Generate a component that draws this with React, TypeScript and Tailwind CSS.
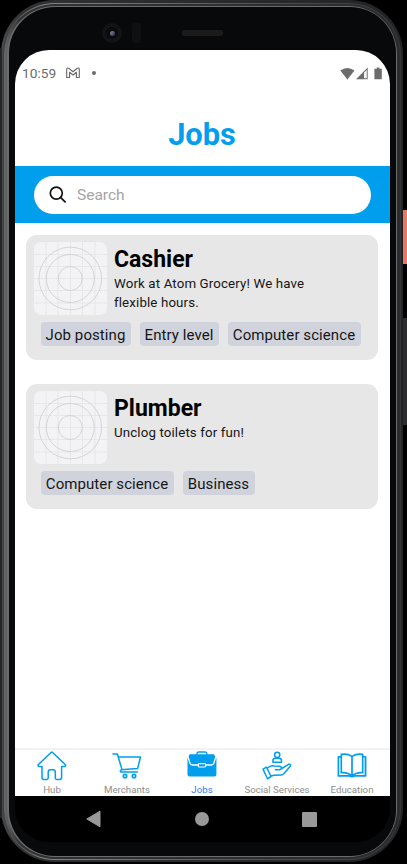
import React from "react";

const BLUE = "#019eed";

function Thumb() {
  return (
    <svg className="block h-[73px] w-[73px] shrink-0 rounded-[7px] bg-[#f3f3f6]" viewBox="0 0 73 73" fill="none">
      <path d="M12 0V73M24 0V73M36.5 0V73M48.5 0V73M61 0V73M0 12.5H73M0 24.5H73M0 36.5H73M0 48.5H73M0 61H73" stroke="#e6e6e9" strokeWidth="0.9" />
      <g stroke="#d0d0d3" strokeWidth="0.9">
        <circle cx="36.3" cy="36.5" r="12" />
        <circle cx="36.3" cy="36.5" r="24" />
        <circle cx="36.3" cy="36.5" r="31.3" />
      </g>
    </svg>
  );
}

type Job = { title: string; lines: string[]; tags: { label: string; width: string }[] };

const jobs: Job[] = [
  {
    title: "Cashier",
    lines: ["Work at Atom Grocery! We have", "flexible hours."],
    tags: [
      { label: "Job posting", width: "w-[90px]" },
      { label: "Entry level", width: "w-[79px]" },
      { label: "Computer science", width: "w-[133px]" },
    ],
  },
  {
    title: "Plumber",
    lines: ["Unclog toilets for fun!"],
    tags: [
      { label: "Computer science", width: "w-[133px]" },
      { label: "Business", width: "w-[72px]" },
    ],
  },
];

function JobCard({ job }: { job: Job }) {
  return (
    <article className="h-[125px] w-[352px] rounded-[11px] bg-[#e7e7e7] pt-[7px] pl-[8px]">
      <div className="flex gap-[7px]">
        <Thumb />
        <div className="pt-[4px]">
          <h2 className="text-[23px] leading-[28px] font-bold text-black">{job.title}</h2>
          {job.lines.map((line) => (
            <p key={line} className="text-[13.3px] leading-[19px] tracking-[0.13px] whitespace-nowrap text-[#161616]">{line}</p>
          ))}
        </div>
      </div>
      <div className="flex gap-[9px] pt-[7px] pl-[7px]">
        {job.tags.map((tag) => (
          <span key={tag.label} className={"flex h-[24px] items-center justify-center rounded-[4px] bg-[#d0d3dc] pt-px pr-px text-[15px] leading-[20px] tracking-[0.08px] whitespace-nowrap text-[#161616] " + tag.width}>{tag.label}</span>
        ))}
      </div>
    </article>
  );
}

function HubIcon() {
  return (
    <svg className="h-[30px] w-[30px]" viewBox="0 0 30 30" fill="none" stroke={BLUE} strokeWidth="1.5" strokeLinejoin="round" strokeLinecap="round">
      <path d="M14.3 1.3 1.2 13.7Q.5 15 2 15.4H5V26.5Q5 28.4 6.8 28.4H9.8Q11.2 28.4 11.2 27V21.4Q11.2 18.8 13.3 18.8H16.2Q18.3 18.8 18.3 21.4V27Q18.3 28.4 19.8 28.4H22.7Q24.6 28.4 24.6 26.5V15.4H27.7Q29.2 15 28.4 13.7L15.3 1.3Q14.8.9 14.3 1.3Z" />
    </svg>
  );
}

function CartIcon() {
  return (
    <svg className="h-[30px] w-[30px]" viewBox="0 0 30 30" fill="none" stroke={BLUE} strokeWidth="1.5" strokeLinejoin="round" strokeLinecap="round">
      <path d="M1 3H5.4L10 18.6M6 6H28.5L25.6 17.5L9.2 18.8Q7.4 20.8 9.4 21H25.5" />
      <circle cx="13" cy="25" r="1.7" strokeWidth="1.7" />
      <circle cx="22" cy="25" r="1.7" strokeWidth="1.7" />
    </svg>
  );
}

function JobsIcon() {
  return (
    <svg className="h-[30px] w-[30px]" viewBox="0 0 30 30" fill="none">
      <path d="M10 3.8V2.8Q10 1 11.6 1H18.2Q19.8 1 19.8 2.8V3.8" stroke={BLUE} strokeWidth="1.5" />
      <path d="M2.7 3.3H26.8L29.4 7V23.5Q29.4 25.4 27.4 25.4H2.4Q.5 25.4 .5 23.5V7Z" fill={BLUE} />
      <path d="M.6 4.5 3 12.3Q3.6 14 5.4 14H11M18.8 14H24.4Q26.2 14 26.8 12.3L29.3 4.5" stroke="white" strokeWidth="1.3" />
      <rect x="11.3" y="12.6" width="7.3" height="3.4" rx="1.1" fill={BLUE} stroke="white" strokeWidth="1.2" />
    </svg>
  );
}

function ServicesIcon() {
  return (
    <svg className="h-[30px] w-[30px]" viewBox="0 0 30 30" fill="none" stroke={BLUE} strokeWidth="1.5" strokeLinejoin="round" strokeLinecap="round">
      <circle cx="15.2" cy="3.8" r="2.6" />
      <path d="M10.9 11.2V9.7Q10.9 7.2 13.5 7.2H16.9Q19.5 7.2 19.5 9.7V11.2Z" />
      <path d="M1 18.1 4.5 16.2 9 25.5 5.5 27.8ZM5.2 17.2Q8.8 13.8 12 15L17.5 15.2Q19.5 15.4 19.3 17.2 19 18.8 17 18.8H13.4M19 18 26.5 13.3Q28.8 12.6 28.5 15L22 22.4Q20.8 23.8 19 23.9L12 24.2 9 25" />
    </svg>
  );
}

function EducationIcon() {
  return (
    <svg className="h-[30px] w-[30px]" viewBox="0 0 30 30" fill="none" stroke={BLUE} strokeWidth="1.7" strokeLinejoin="round">
      <path d="M15 5.4Q10 2.2 4.3 3.4V21.7Q10.5 20.9 15 25Q19.5 20.9 25.7 21.7V3.4Q20 2.2 15 5.4ZM15 5.2V24.8" />
      <path d="M4.3 5.8H1.4V24.8H12Q15 26.6 18 24.8H28.6V5.8H25.7" />
      <path d="M27.1 6.6V24" stroke="#8fd2f5" strokeWidth="1.4" />
    </svg>
  );
}

const tabs = [
  { label: "Hub", icon: <HubIcon /> },
  { label: "Merchants", icon: <CartIcon /> },
  { label: "Jobs", icon: <JobsIcon />, active: true },
  { label: "Social Services", icon: <ServicesIcon /> },
  { label: "Education", icon: <EducationIcon /> },
];

function StatusBar() {
  return (
    <div className="flex h-[46px] shrink-0 items-center pl-[7px] text-[#6c6c6c]">
      <span className="w-[35px] text-[13.7px] leading-[18px] whitespace-nowrap">10:59</span>
      <svg className="ml-[9px] h-[12px] w-[14px]" viewBox="0 0 14 12" fill="none" stroke="currentColor" strokeWidth="1.15">
        <path d="M.7 10.5V2.4Q.8.3 2.8 1.3L7 4.8 11.2 1.3Q13.2.3 13.3 2.4V10.5H10.4V5.3L7 8 3.6 5.3V10.5Z" strokeLinejoin="round" />
      </svg>
      <span className="ml-[12px] h-[4px] w-[4px] rounded-full bg-[#6c6c6c]" />
      <svg className="ml-auto mr-[7px] h-[13px] w-[43px]" viewBox="0 0 43 13" fill="#6c6c6c">
        <path d="M.3 3.6Q7.3-1.6 14.5 3.6L7.4 12.4Z" />
        <path d="M16 12.2 27.7.5V12.2Z" fill="#6c6c6c" />
        <path d="M24 5.5 26.8 3V11.2H24Z" fill="#f3f3f3" />
        <path d="M36.8.5H39.4V1.8H41.8V12.3H34.4V1.8H36.8Z" />
      </svg>
    </div>
  );
}

export default function App() {
  return (
    <div className="relative h-[864px] w-[407px] overflow-hidden bg-black font-['Roboto',sans-serif]">
      <div className="absolute top-[210px] right-0 h-[54px] w-[4px] bg-[#e77865]" />
      <div className="absolute top-[318px] right-0 h-[107px] w-[4px] bg-[#2b2c2e]" />
      <div className="absolute top-[48px] left-0 h-[770px] w-[2px] bg-[#252525]" />

      <div className="ml-[1px] h-[862px] w-[402px] rounded-[54px] bg-linear-to-r from-[#4a4b4c] from-0% via-[#303132] via-5% to-[#232426] p-[2px] pt-[3px]">
        <div className="h-full rounded-[52px] bg-linear-to-r from-[#3a3b3c] from-0% via-[#838484] via-10% to-[#343536] p-px">
          <div className="h-full rounded-[51px] bg-linear-to-r from-[#67686a] from-0% via-[#303132] via-4% to-[#2b2c2e] py-[2px] pr-[3px] pl-[3px]">
            <div className="h-full rounded-[48px] bg-[#6c6d6b] p-px pl-[2px]">
              <div className="flex h-full flex-col rounded-[46px] bg-[#08090b] pt-[43px] pr-[6px] pl-[6px]">
                <main className="flex h-[746px] w-[375px] shrink-0 flex-col overflow-hidden rounded-t-[34px] bg-white">
                  <StatusBar />
                  <h1 className="flex h-[70px] shrink-0 items-center justify-center pt-[7px] pr-px text-[30.8px] leading-[36px] font-bold text-[#019eed]">Jobs</h1>
                  <div className="flex h-[57px] shrink-0 items-center bg-[#019eed] pl-[19px]">
                    <label className="flex h-[38px] w-[337px] items-center rounded-full bg-white pl-[14px]">
                      <svg className="h-[20px] w-[20px]" viewBox="0 0 20 20" fill="none" stroke="#111" strokeWidth="1.7" strokeLinecap="round">
                        <circle cx="8.3" cy="8.1" r="6" />
                        <path d="m12.8 12.6 4.3 4.3" />
                      </svg>
                      <span className="ml-[9px] pt-px text-[15.5px] leading-[20px] text-[#a5a5a5]">Search</span>
                    </label>
                  </div>
                  <section className="flex flex-1 flex-col gap-[24px] pt-[12px] pl-[11px]">
                    {jobs.map((job) => <JobCard key={job.title} job={job} />)}
                  </section>
                  <nav className="grid h-[48px] shrink-0 grid-cols-5 border-t-2 border-[#f2f2f2]">
                    {tabs.map((tab) => (
                      <div key={tab.label} className={"flex flex-col items-center pt-px pr-px text-[9.7px] leading-[12px] whitespace-nowrap " + (tab.active ? "text-[#3478f6]" : "text-[#8e8e8f]")}>
                        {tab.icon}
                        <span className="pt-[3px]">{tab.label}</span>
                      </div>
                    ))}
                  </nav>
                </main>
                <div className="flex h-[46px] w-[375px] items-center justify-between rounded-b-[34px] bg-black pr-[73px] pl-[71px]">
                  <svg className="h-[18px] w-[15px]" viewBox="0 0 15 18" fill="#999"><path d="M14 1.2V16.8L.8 9Z" stroke="#999" strokeLinejoin="round" /></svg>
                  <span className="h-[14px] w-[14px] rounded-full bg-[#999]" />
                  <span className="h-[15px] w-[15px] rounded-[1px] bg-[#999]" />
                </div>
              </div>
            </div>
          </div>
        </div>
      </div>

      <div className="absolute top-[23px] left-[102px] flex h-[20px] w-[20px] items-center justify-center rounded-full bg-[#121316]">
        <div className="flex h-[12px] w-[12px] items-center justify-center rounded-full bg-[#090a0d]">
          <span className="h-[5px] w-[5px] rounded-full bg-linear-to-br from-[#929296] to-[#22264e]" />
        </div>
      </div>
      <div className="absolute top-[23px] left-[132px] h-[20px] w-[9px] rounded-[3px] bg-[#0f1012]" />
      <div className="absolute top-[30px] left-[182px] h-[6px] w-[41px] rounded-[2px] bg-[#1b1b1c]" />
    </div>
  );
}
